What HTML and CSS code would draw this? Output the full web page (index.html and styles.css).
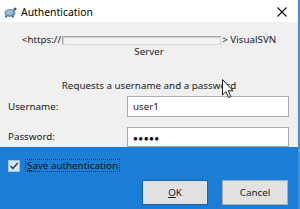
FILE: index.html
```html
<!DOCTYPE html>
<html>
<head>
<meta charset="utf-8">
<link rel="stylesheet" href="styles.css">
</head>
<body>
<div class="window">
  <div class="titlebar">
    <svg class="app-icon" width="14" height="12" viewBox="0 0 14 12">
      <ellipse cx="7" cy="7" rx="5.5" ry="4" fill="#6d8fb3"/>
      <ellipse cx="6.5" cy="6.5" rx="3.5" ry="2.5" fill="#9fb9d3"/>
      <circle cx="12" cy="3" r="1.6" fill="#3d5c7d"/>
      <rect x="2" y="9.5" width="2" height="2" fill="#4d6e90"/>
      <rect x="9" y="9.5" width="2" height="2" fill="#4d6e90"/>
    </svg>
    <span class="title">Authentication</span>
    <svg class="close" width="10" height="10" viewBox="0 0 10 10">
      <path d="M0.5 0.5 L9.5 9.5 M9.5 0.5 L0.5 9.5" stroke="#111" stroke-width="1.1"/>
    </svg>
  </div>
  <div class="content">
    <div class="url-line"><span>&lt;https://</span><span class="redacted"></span><span>&gt; VisualSVN</span></div>
    <div class="server">Server</div>
    <div class="request">Requests a username and a password</div>
    <div class="form">
      <label class="label">Username:</label>
      <div class="input">user1</div>
      <label class="label">Password:</label>
      <div class="input dots">●●●●●</div>
    </div>
  </div>
  <div class="footer">
    <div class="check-row">
      <span class="checkbox">
        <svg width="10" height="10" viewBox="0 0 10 10"><path d="M1.5 5 L4 7.5 L8.8 1.8" stroke="#2b2b2b" stroke-width="1.3" fill="none"/></svg>
      </span>
      <span class="check-label"><u>S</u>ave authentication</span>
    </div>
    <div class="buttons">
      <div class="btn btn-ok"><u>O</u>K</div>
      <div class="btn">Cancel</div>
    </div>
  </div>
  <svg class="cursor" width="13" height="20" viewBox="0 0 13 20">
    <path d="M0.5 0.5 L0.5 16 L4 12.6 L6.6 18.5 L8.8 17.5 L6.3 11.8 L11 11.8 Z" fill="#fff" stroke="#222" stroke-width="1"/>
  </svg>
</div>
</body>
</html>
```

FILE: styles.css
```css
html, body {
  margin: 0;
  padding: 0;
  width: 300px;
  height: 209px;
  overflow: hidden;
  background: #1a7ed6;
}
body {
  font-family: "Noto Sans", "Liberation Sans", sans-serif;
  font-size: 9.8px;
  color: #1a1a1a;
}
.window {
  position: relative;
  width: 298px;
  height: 209px;
  display: flex;
  flex-direction: column;
  border-right: 2px solid #3f96e0;
}
.titlebar {
  height: 22px;
  background: #ffffff;
  display: flex;
  align-items: center;
  flex-shrink: 0;
}
.app-icon {
  margin-left: 3px;
  margin-top: 1px;
}
.title {
  margin-left: 4px;
  font-size: 10.4px;
  color: #000;
  margin-top: 1px;
}
.close {
  margin-left: auto;
  margin-right: 11px;
  margin-top: 1px;
}
.content {
  background: #f0f0f0;
  height: 125px;
  flex-shrink: 0;
  display: flex;
  flex-direction: column;
}
.url-line {
  margin-top: 11px;
  height: 14px;
  line-height: 14px;
  display: flex;
  justify-content: center;
  align-items: center;
}
.redacted {
  width: 157px;
  height: 7px;
  border: 1px solid #a8a8a8;
  border-bottom-color: #d8d8d8;
  border-right-color: #d0d0d0;
  box-shadow: inset 1px 1px 1px #c8c8c8;
  background: #f4f4f4;
  margin: 0 1px 0 1px;
}
.server {
  text-align: center;
  line-height: 13px;
  margin-top: -2px;
}
.request {
  text-align: center;
  line-height: 14px;
  margin-top: 21px;
}
.form {
  margin-top: 3px;
  display: grid;
  grid-template-columns: 119px 162px;
  grid-template-rows: 21px 20px;
  row-gap: 10px;
  padding-left: 8px;
  align-items: center;
}
.label {
  line-height: 14px;
}
.input {
  height: 100%;
  box-sizing: border-box;
  background: #fff;
  border: 1px solid #adadad;
  padding-left: 5px;
  display: flex;
  align-items: center;
}
.dots {
  font-size: 8px;
  letter-spacing: 0.5px;
  color: #000;
}
.footer {
  flex: 1;
  background: #1a7ed6;
  padding-top: 12px;
  display: flex;
  flex-direction: column;
}
.check-row {
  display: flex;
  align-items: center;
  padding-left: 8px;
  height: 13px;
}
.checkbox {
  width: 10px;
  height: 10px;
  border: 1px solid #9cc4ea;
  background: #d3e6f8;
  display: flex;
  align-items: center;
  justify-content: center;
}
.check-label {
  margin-left: 5px;
  line-height: 11px;
  border: 1px dotted #222;
  padding: 0 1px;
  color: #101010;
}
.buttons {
  margin-top: 8px;
  display: flex;
  justify-content: flex-end;
  gap: 14px;
  padding-right: 10px;
}
.btn {
  width: 64px;
  height: 23px;
  background: #e1e1e1;
  border: 1px solid #adadad;
  display: flex;
  align-items: center;
  justify-content: center;
  color: #1a1a1a;
}
.btn-ok {
  border-color: #1466b0;
}
.cursor {
  position: absolute;
  left: 222px;
  top: 79px;
}
```
